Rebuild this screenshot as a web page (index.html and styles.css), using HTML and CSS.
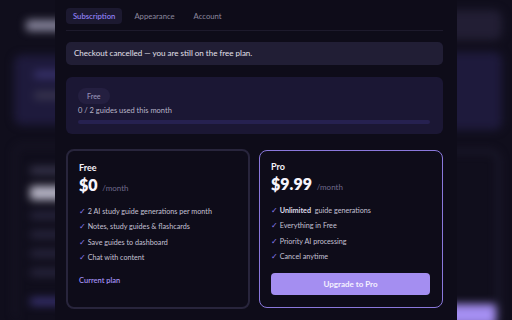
FILE: index.html
```html
<!DOCTYPE html>
<html>
<head>
  <meta charset="UTF-8">
  <title>Settings</title>
  <link rel="stylesheet" href="styles.css">
</head>
<body>
  <div class="backdrop">
    <div class="side side-left">
      <div class="blob blob-title"></div>
      <div class="bg-card bg-purple">
        <div class="blob blob-accent"></div>
        <div class="blob blob-dim"></div>
      </div>
      <div class="bg-card bg-outline">
        <div class="blob blob-dim"></div>
        <div class="blob blob-price"></div>
        <div class="blob blob-row"></div>
        <div class="blob blob-row"></div>
        <div class="blob blob-row"></div>
        <div class="blob blob-row"></div>
        <div class="blob blob-link"></div>
      </div>
    </div>
    <div class="middle"></div>
    <div class="side side-right">
      <div class="bg-card bg-grey"></div>
      <div class="bg-card bg-purple tall"></div>
      <div class="bg-card bg-outline right">
        <div class="blob blob-button"></div>
      </div>
    </div>
  </div>

  <div class="modal">
    <div class="tabs">
      <button class="tab active">Subscription</button>
      <button class="tab">Appearance</button>
      <button class="tab">Account</button>
    </div>

    <div class="notice">Checkout cancelled — you are still on the free plan.</div>

    <div class="usage">
      <span class="badge">Free</span>
      <p class="usage-text">0 / 2 guides used this month</p>
      <div class="progress"><div class="progress-fill" style="width: 0%"></div></div>
    </div>

    <div class="plans">
      <div class="plan">
        <h3 class="plan-name">Free</h3>
        <div class="price">$0 <span class="per">/month</span></div>
        <ul class="features">
          <li>2 AI study guide generations per month</li>
          <li>Notes, study guides &amp; flashcards</li>
          <li>Save guides to dashboard</li>
          <li>Chat with content</li>
        </ul>
        <div class="current">Current plan</div>
      </div>

      <div class="plan pro">
        <h3 class="plan-name">Pro</h3>
        <div class="price">$9.99 <span class="per">/month</span></div>
        <ul class="features">
          <li><strong>Unlimited</strong> guide generations</li>
          <li>Everything in Free</li>
          <li>Priority AI processing</li>
          <li>Cancel anytime</li>
        </ul>
        <button class="upgrade">Upgrade to Pro</button>
      </div>
    </div>
  </div>
</body>
</html>
```

FILE: styles.css
```css
body {
  margin: 0;
  width: 512px;
  height: 320px;
  overflow: hidden;
  position: relative;
  background-color: #100e1c;
  font-family: Lato, "Noto Sans", sans-serif;
  color: #e6e3ef;
}

/* blurred page behind the dialog */
.backdrop {
  display: grid;
  grid-template-columns: 70px 1fr 80px;
  height: 320px;
  filter: blur(4px);
}

.side {
  display: flex;
  flex-direction: column;
}

.side-left {
  padding-left: 14px;
}

.side-right {
  padding-left: 2px;
  padding-right: 10px;
}

.bg-card {
  border-radius: 8px;
  box-sizing: border-box;
}

.bg-purple {
  background-color: #1e1a3c;
  height: 70px;
  margin-top: 24px;
  padding: 16px 0 0 20px;
  display: flex;
  flex-direction: column;
  gap: 14px;
}

.bg-purple.tall {
  height: 78px;
  margin-top: 12px;
  padding: 0;
}

.bg-grey {
  background-color: #221e34;
  height: 30px;
  margin-top: 10px;
}

.bg-outline {
  flex: 1;
  margin-top: 20px;
  border: 2px solid #1e1b2e;
  border-bottom: none;
  padding: 20px 0 0 14px;
  display: flex;
  flex-direction: column;
  gap: 12px;
}

.bg-outline.right {
  justify-content: flex-end;
  padding: 0;
  margin-right: 2px;
  border: 3px solid #221f34;
  border-left: none;
  border-bottom: none;
  border-radius: 0 10px 0 0;
}

.blob {
  height: 7px;
  border-radius: 3px;
}

.blob-title {
  width: 40px;
  height: 11px;
  margin: 20px 0 0 12px;
  background-color: #85839a;
}

.blob-accent {
  background-color: #3a3470;
}

.blob-dim {
  background-color: #3b3850;
}

.blob-price {
  height: 14px;
  background-color: #b5b3c4;
}

.blob-row {
  background-color: #2a2740;
}

.blob-link {
  margin-top: 10px;
  background-color: #3b3478;
}

.blob-button {
  height: 22px;
  width: 62px;
  margin-bottom: -6px;
  background-color: #a48ef1;
}

/* dialog */
.modal {
  position: absolute;
  top: 0;
  left: 55px;
  width: 377px;
  height: 320px;
  padding: 8px 14px 0 11px;
  background-color: #0e0c19;
  box-sizing: content-box;
}

.tabs {
  display: flex;
  gap: 5px;
  padding-bottom: 6px;
  border-bottom: 1px solid #1d1a2c;
}

.tab {
  font-family: inherit;
  font-size: 7.7px;
  border: none;
  background: none;
  color: #8c889e;
  padding: 0 7px;
  height: 16px;
  border-radius: 4px;
}

.tab.active {
  background-color: #1c1930;
  color: #8f7ff2;
  font-weight: 600;
}

.notice {
  margin-top: 11px;
  height: 23px;
  line-height: 23px;
  padding: 0 8px;
  background-color: #211e35;
  border-radius: 5px;
  font-size: 8px;
  color: #e4e1ec;
}

.usage {
  margin-top: 12px;
  height: 57px;
  box-sizing: border-box;
  padding: 11px 13px 0 12px;
  background-color: #1b1734;
  border-radius: 6px;
  display: flex;
  flex-direction: column;
  align-items: flex-start;
}

.badge {
  height: 16px;
  line-height: 16px;
  padding: 0 9px;
  border-radius: 8px;
  background-color: #241f40;
  color: #958fb4;
  font-size: 7px;
  font-weight: 600;
}

.usage-text {
  margin: 1px 0 3px;
  line-height: 12px;
  font-size: 7.5px;
  color: #b9b5c8;
}

.progress {
  align-self: stretch;
  height: 4px;
  background-color: #262150;
  border-radius: 2px;
}

.progress-fill {
  height: 100%;
  background-color: #8f7ff2;
}

.plans {
  margin-top: 15px;
  display: grid;
  grid-template-columns: 1fr 1fr;
  gap: 9px;
}

.plan {
  height: 160px;
  box-sizing: border-box;
  border: 2px solid #28253c;
  border-radius: 8px;
  padding: 11px 12px 0 11px;
}

.plan.pro {
  border: 1.5px solid #8a78dc;
  margin-top: 1px;
  height: 158px;
  padding-top: 10px;
}

.plan-name {
  margin: 0;
  font-size: 9px;
  font-weight: 700;
  color: #f4f2fa;
}

.price {
  margin-top: 2px;
  font-size: 16px;
  font-weight: 800;
  color: #f6f4fc;
}

.per {
  font-size: 8px;
  font-weight: 400;
  color: #6f6a8c;
  margin-left: 1px;
}

.features {
  list-style: none;
  margin: 10px 0 0;
  padding: 0;
}

.features li {
  font-size: 7.2px;
  line-height: 15.3px;
  color: #c4c0d4;
}

.features li::before {
  content: "✓";
  font-family: "DejaVu Sans", sans-serif;
  font-size: 8px;
  color: #8f7ff2;
  margin-right: 2px;
}

.features strong {
  font-weight: 700;
  color: #dedbe8;
  margin-right: 2px;
}

.current {
  margin-top: 11px;
  font-size: 7.5px;
  font-weight: 600;
  color: #a290f4;
}

.upgrade {
  display: block;
  width: 100%;
  margin-top: 9px;
  height: 22px;
  border: none;
  border-radius: 4px;
  background-color: #a48ef1;
  color: #f4f1ff;
  font-family: inherit;
  font-size: 8px;
  font-weight: 700;
}
```
